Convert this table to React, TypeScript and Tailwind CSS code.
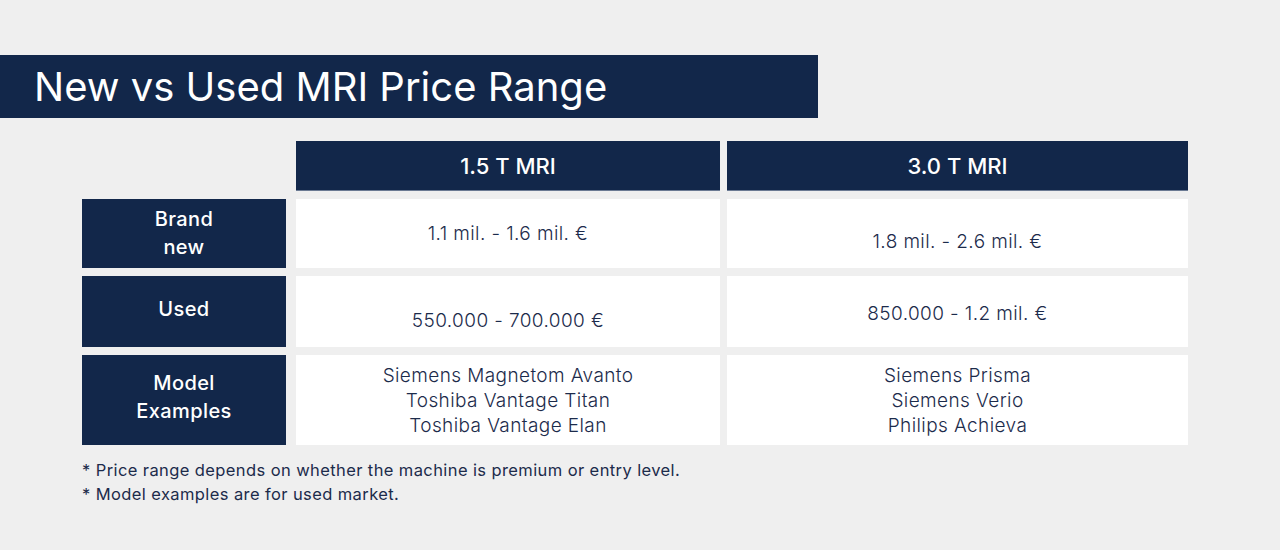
const navy = "bg-[#12274a]";

function Label({ lines, shift = "" }: { lines: string[]; shift?: string }) {
  return (
    <div className={`${navy} col-start-1 flex flex-col items-center justify-center text-[20px] leading-[28px] font-medium tracking-[0.4px] text-white ${shift}`}>
      {lines.map((l) => (
        <span key={l}>{l}</span>
      ))}
    </div>
  );
}

function Cell({ children, col, shift = "" }: { children: React.ReactNode; col: string; shift?: string }) {
  return (
    <div className={`${col} flex flex-col items-center justify-center bg-white text-[19px] font-light tracking-[0.4px] text-[#1c2b4b] ${shift}`}>
      {children}
    </div>
  );
}

export default function App() {
  return (
    <div className="h-[550px] w-[1280px] bg-[#efefef] pt-[55px] font-['Inter',sans-serif]">
      <div className={`${navy} flex h-[63px] w-[818px] items-center pl-[34px]`}>
        <h1 className="text-[40px] font-normal text-white">New vs Used MRI Price Range</h1>
      </div>

      <div className="ml-[82px] mt-[23px] grid w-[1106px] grid-cols-[204px_10px_424px_7px_461px] grid-rows-[50px_69px_71px_90px] gap-y-[8px]">
        <div className="col-start-1" />
        <div className={`${navy} col-start-3 flex items-center justify-center border-b border-[#6b7a93] pt-[1px] text-[22px] font-medium text-white`}>1.5 T MRI</div>
        <div className={`${navy} col-start-5 flex items-center justify-center border-b border-[#6b7a93] pt-[1px] text-[22px] font-medium text-white`}>3.0 T MRI</div>

        <Label lines={["Brand", "new"]} shift="pb-[2px]" />
        <Cell col="col-start-3" shift="pt-[1px]">1.1 mil. - 1.6 mil. €</Cell>
        <Cell col="col-start-5" shift="pt-[17px]">1.8 mil. - 2.6 mil. €</Cell>

        <div className={`${navy} col-start-1 flex items-center justify-center pb-[5px] text-[20px] font-medium tracking-[0.4px] text-white`}>Used</div>
        <Cell col="col-start-3" shift="pt-[20px]">550.000 - 700.000 €</Cell>
        <Cell col="col-start-5" shift="pt-[5px]">850.000 - 1.2 mil. €</Cell>

        <Label lines={["Model", "Examples"]} shift="pb-[6px]" />
        <Cell col="col-start-3" shift="leading-[25px]">
          <span>Siemens Magnetom Avanto</span>
          <span>Toshiba Vantage Titan</span>
          <span>Toshiba Vantage Elan</span>
        </Cell>
        <Cell col="col-start-5" shift="leading-[25px]">
          <span>Siemens Prisma</span>
          <span>Siemens Verio</span>
          <span>Philips Achieva</span>
        </Cell>
      </div>

      <div className="ml-[82px] mt-[13px] text-[16.5px] leading-[24px] tracking-[0.4px] text-[#1c2b4b]">
        <p>* Price range depends on whether the machine is premium or entry level.</p>
        <p>* Model examples are for used market.</p>
      </div>
    </div>
  );
}
